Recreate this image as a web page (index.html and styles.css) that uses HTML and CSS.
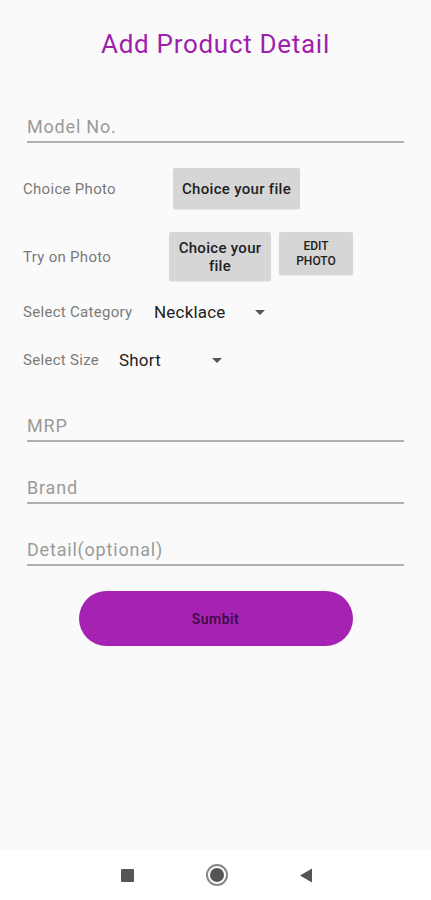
FILE: index.html
```html
<!DOCTYPE html>
<html lang="en">
<head>
<meta charset="UTF-8">
<meta name="viewport" content="width=device-width, initial-scale=1.0">
<title>Add Product Detail</title>
<link rel="stylesheet" href="styles.css">
</head>
<body>
  <div class="screen">
    <main class="form-box">
      <h1 class="title">Add Product Detail</h1>

      <input class="line-input first" type="text" placeholder="Model No.">

      <div class="row photo-row">
        <span class="label">Choice Photo</span>
        <button class="grey-btn file-btn">Choice your file</button>
      </div>

      <div class="row try-row">
        <span class="label">Try on Photo</span>
        <button class="grey-btn file-btn two-line">Choice your<br>file</button>
        <button class="grey-btn edit-btn">EDIT<br>PHOTO</button>
      </div>

      <div class="row select-row">
        <span class="label category-label">Select Category</span>
        <div class="spinner category">
          <span>Necklace</span>
          <span class="arrow"></span>
        </div>
      </div>

      <div class="row select-row">
        <span class="label size-label">Select Size</span>
        <div class="spinner size">
          <span>Short</span>
          <span class="arrow"></span>
        </div>
      </div>

      <input class="line-input gap-top" type="text" placeholder="MRP">
      <input class="line-input" type="text" placeholder="Brand">
      <input class="line-input" type="text" placeholder="Detail(optional)">

      <button class="submit-btn">Sumbit</button>
    </main>

    <nav class="nav-bar">
      <span class="nav-item"><span class="nav-square"></span></span>
      <span class="nav-item"><span class="nav-circle"></span></span>
      <span class="nav-item">
        <svg width="14" height="15" viewBox="0 0 14 15"><path d="M13 0.5 L13 14.5 L1 7.5 Z" fill="#555"/></svg>
      </span>
    </nav>
  </div>
</body>
</html>
```

FILE: styles.css
```css
  body {
    margin: 0;
    padding: 0;
    font-family: Roboto, 'Liberation Sans', sans-serif;
    background-color: #fafafa;
  }

  .screen {
    display: flex;
    flex-direction: column;
    height: 900px;
  }

  .form-box {
    flex: 1;
    display: flex;
    flex-direction: column;
    padding: 30px 27px 0 23px;
  }

  .title {
    margin: 0;
    text-align: center;
    font-size: 26px;
    line-height: 28px;
    letter-spacing: 0.7px;
    font-weight: 400;
    color: #9e1fac;
    padding-left: 4px;
  }

  .line-input {
    display: block;
    margin: 35px 0 0 4px;
    padding: 0 0 3px 0;
    height: 22px;
    line-height: 22px;
    font-family: Roboto, 'Liberation Sans', sans-serif;
    font-size: 18px;
    letter-spacing: 0.8px;
    color: #222;
    background: transparent;
    border: none;
    border-bottom: 2px solid #b0b0b0;
    outline: none;
  }

  .line-input::placeholder {
    color: #9a9a9a;
  }

  .line-input.first {
    margin-top: 58px;
  }

  .line-input.gap-top {
    margin-top: 43px;
  }

  .row {
    display: flex;
    align-items: center;
  }

  .label {
    font-size: 15px;
    letter-spacing: 0.3px;
    color: #7a7a7a;
  }

  .photo-row {
    margin-top: 25px;
  }

  .photo-row .label {
    width: 150px;
  }

  .try-row {
    margin-top: 23px;
    align-items: flex-start;
  }

  .try-row .label {
    width: 146px;
    align-self: center;
  }

  .grey-btn {
    border: none;
    border-radius: 2px;
    background-color: #d6d6d6;
    color: #222;
    font-family: Roboto, 'Liberation Sans', sans-serif;
    font-weight: 500;
    padding: 0;
    box-shadow: 0 1px 1px rgba(0, 0, 0, 0.06);
  }

  .file-btn {
    width: 127px;
    height: 41px;
    font-size: 15px;
    letter-spacing: 0.3px;
  }

  .file-btn.two-line {
    width: 102px;
    height: 49px;
    line-height: 18px;
  }

  .edit-btn {
    width: 74px;
    height: 43px;
    margin-left: 8px;
    font-size: 12px;
    line-height: 15px;
  }

  .select-row {
    height: 24px;
    margin-top: 19px;
  }

  .select-row + .select-row {
    margin-top: 24px;
  }

  .category-label {
    width: 131px;
  }

  .size-label {
    width: 96px;
  }

  .spinner {
    display: flex;
    align-items: center;
    justify-content: space-between;
    font-size: 17px;
    letter-spacing: 0.2px;
    color: #222;
  }

  .spinner.category {
    width: 111px;
  }

  .spinner.size {
    width: 103px;
  }

  .arrow {
    width: 0;
    height: 0;
    border-left: 5px solid transparent;
    border-right: 5px solid transparent;
    border-top: 5px solid #555;
  }

  .submit-btn {
    align-self: center;
    margin: 25px 0 0 4px;
    width: 274px;
    height: 55px;
    border: none;
    border-radius: 28px;
    background-color: #a522b2;
    color: #3a0a40;
    font-family: Roboto, 'Liberation Sans', sans-serif;
    font-size: 14px;
    letter-spacing: 0.5px;
    font-weight: 500;
  }

  .nav-bar {
    height: 50px;
    background-color: #ffffff;
    display: flex;
    justify-content: center;
    align-items: center;
    gap: 49px;
    padding-left: 2px;
  }

  .nav-item {
    width: 40px;
    display: flex;
    justify-content: center;
    align-items: center;
  }

  .nav-square {
    width: 13px;
    height: 13px;
    background-color: #555;
    border-radius: 1px;
  }

  .nav-circle {
    width: 14px;
    height: 14px;
    border-radius: 50%;
    background-color: #555;
    box-shadow: 0 0 0 2px #fff, 0 0 0 4px #888;
  }
```
